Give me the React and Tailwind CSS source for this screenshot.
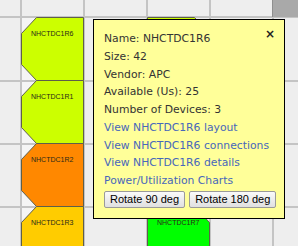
import React from 'react';

// floor plan cells are 63px wide, rack shapes are drawn on the canvas
const leftRacks = [
  { name: 'NHCTDC1R6', top: 17, fill: '#ccff00' },
  { name: 'NHCTDC1R1', top: 80, fill: '#ccff00' },
  { name: 'NHCTDC1R2', top: 143, fill: '#ff8800' },
  { name: 'NHCTDC1R3', top: 206, fill: '#ffcc00' },
];

// the upper one sits under the popup, so its label is not drawn
const rightRacks = [
  { name: '', top: 17, fill: '#ccff00' },
  { name: 'NHCTDC1R7', top: 206, fill: '#00ff00' },
];

function leftShape(t) {
  return `36.5,${t + 0.5} 83.5,${t + 0.5} 83.5,${t + 63.5} 36.5,${t + 63.5} 21.5,${t + 47.5} 21.5,${t + 16.5}`;
}

function rightShape(t) {
  return `147.5,${t + 0.5} 194.5,${t + 0.5} 209.5,${t + 16.5} 209.5,${t + 47.5} 194.5,${t + 63.5} 147.5,${t + 63.5}`;
}

function FloorPlan() {
  const cols = [20, 83, 146, 209, 272];
  const rows = [16, 80, 143, 206];
  return (
    <svg width="298" height="246" className="absolute left-0 top-0">
      <rect x="0" y="0" width="298" height="246" fill="#eeeeee" />
      {leftRacks.map(r => (
        <rect key={r.name + 'bg'} x="21" y={r.top} width="62" height="63" fill="#f5f5f5" />
      ))}
      {cols.map(x => (
        <rect key={'c' + x} x={x} y="0" width="2" height="246" fill="#c4c4c4" />
      ))}
      {rows.map(y => (
        <rect key={'r' + y} x="0" y={y} width="298" height="2" fill="#c4c4c4" />
      ))}
      <rect x="272" y="0" width="26" height="17" fill="#a9a9a9" />
      <rect x="272" y="0" width="1" height="17" fill="#8f8f8f" />

      {leftRacks.map(r => (
        <g key={r.name}>
          <polygon points={leftShape(r.top)} fill={r.fill} stroke="#5f5f4a" strokeWidth="1" />
          <text x="31" y={r.top + 19} fontSize="7" fontFamily="'Liberation Sans', Arial, sans-serif" fill="#2a2a1a">
            {r.name}
          </text>
        </g>
      ))}
      {rightRacks.map(r => (
        <g key={'rr' + r.top}>
          <polygon points={rightShape(r.top)} fill={r.fill} stroke="#5f5f4a" strokeWidth="1" />
          {r.name && (
            <text x="157" y={r.top + 19} fontSize="7" fontFamily="'Liberation Sans', Arial, sans-serif" fill="#2a2a1a">
              {r.name}
            </text>
          )}
        </g>
      ))}
    </svg>
  );
}

function RackPopup() {
  const lines = [
    'Name: NHCTDC1R6',
    'Size: 42',
    'Vendor: APC',
    'Available (Us): 25',
    'Number of Devices: 3',
  ];
  const links = [
    'View NHCTDC1R6 layout',
    'View NHCTDC1R6 connections',
    'View NHCTDC1R6 details',
    'Power/Utilization Charts',
  ];
  return (
    <div className="absolute left-[93px] top-[19px] w-[192px] h-[200px] border border-black bg-[#ffff99] pl-[10px] pt-[10px] font-['DejaVu_Sans',Verdana,sans-serif] text-[10.8px] leading-[17.75px]">
      <span className="absolute right-[9px] top-[6px] text-[12px] font-bold text-[#222]">×</span>
      {lines.map(l => (
        <div key={l} className="w-fit text-[#333] whitespace-nowrap">{l}</div>
      ))}
      {links.map(l => (
        <div key={l} className="w-fit text-[#4767bb] whitespace-nowrap">{l}</div>
      ))}
      <div className="flex gap-[4px] mt-[1px] font-['Liberation_Sans',Arial,sans-serif]">
        <button className="h-[17px] px-[5px] border border-[#9a9a9a] rounded-[2px] bg-gradient-to-b from-[#fafafa] to-[#e0e0e0] text-[11px] leading-none text-black">
          Rotate 90 deg
        </button>
        <button className="h-[17px] px-[5px] border border-[#9a9a9a] rounded-[2px] bg-gradient-to-b from-[#fafafa] to-[#e0e0e0] text-[11px] leading-none text-black">
          Rotate 180 deg
        </button>
      </div>
    </div>
  );
}

export default function App() {
  return (
    <div className="relative w-[298px] h-[246px] overflow-hidden bg-[#eeeeee]">
      <FloorPlan />
      <RackPopup />
    </div>
  );
}
